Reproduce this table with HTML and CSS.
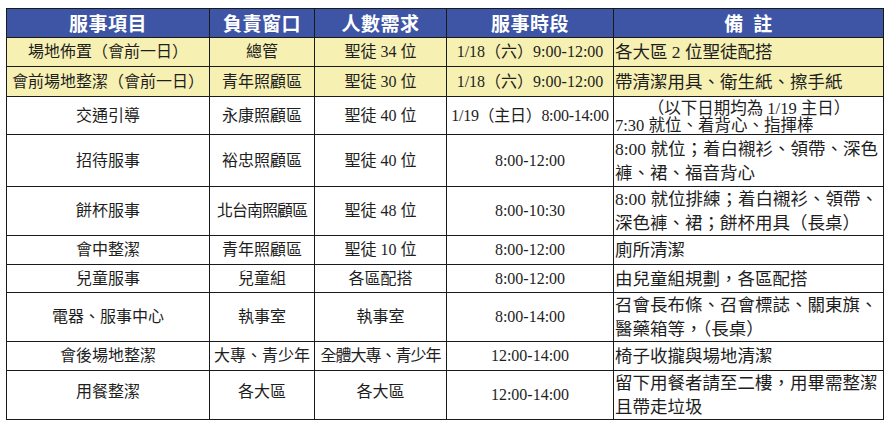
FILE: index.html
```html
<!DOCTYPE html>
<html lang="zh-Hant">
<head>
<meta charset="utf-8">
<link rel="stylesheet" href="styles.css">
</head>
<body>
<table class="plan">
  <colgroup>
    <col class="c1"><col class="c2"><col class="c3"><col class="c4"><col class="c5">
  </colgroup>
  <thead>
    <tr class="head">
      <th>服事項目</th><th>負責窗口</th><th>人數需求</th><th>服事時段</th><th>備&nbsp;&nbsp;註</th>
    </tr>
  </thead>
  <tbody>
    <tr class="hl h29">
      <td>場地佈置（會前一日）</td><td>總管</td><td>聖徒 34 位</td><td class="time">1/18（六）9:00-12:00</td><td class="note">各大區 2 位聖徒配搭</td>
    </tr>
    <tr class="hl h30">
      <td>會前場地整潔（會前一日）</td><td>青年照顧區</td><td>聖徒 30 位</td><td class="time">1/18（六）9:00-12:00</td><td class="note">帶清潔用具、衛生紙、擦手紙</td>
    </tr>
    <tr class="h37">
      <td>交通引導</td><td>永康照顧區</td><td>聖徒 40 位</td><td class="time tight">1/19（主日）8:00-14:00</td><td class="note compact"><div class="center">（以下日期均為 1/19 主日）</div><div>7:30 就位、着背心、指揮棒</div></td>
    </tr>
    <tr class="h52">
      <td>招待服事</td><td>裕忠照顧區</td><td>聖徒 40 位</td><td class="time">8:00-12:00</td><td class="note">8:00 就位；着白襯衫、領帶、深色褲、裙、福音背心</td>
    </tr>
    <tr class="h49">
      <td>餅杯服事</td><td class="narrow">北台南照顧區</td><td>聖徒 48 位</td><td class="time">8:00-10:30</td><td class="note">8:00 就位排練；着白襯衫、領帶、深色褲、裙；餅杯用具（長桌）</td>
    </tr>
    <tr class="h29">
      <td>會中整潔</td><td>青年照顧區</td><td>聖徒 10 位</td><td class="time">8:00-12:00</td><td class="note">廁所清潔</td>
    </tr>
    <tr class="h28">
      <td>兒童服事</td><td>兒童組</td><td>各區配搭</td><td class="time">8:00-12:00</td><td class="note">由兒童組規劃，各區配搭</td>
    </tr>
    <tr class="h49">
      <td>電器、服事中心</td><td>執事室</td><td>執事室</td><td class="time">8:00-14:00</td><td class="note">召會長布條、召會標誌、關東旗、醫藥箱等，（長桌）</td>
    </tr>
    <tr class="h29">
      <td>會後場地整潔</td><td>大專、青少年</td><td class="narrow">全體大專、青少年</td><td class="time">12:00-14:00</td><td class="note">椅子收攏與場地清潔</td>
    </tr>
    <tr class="h48">
      <td class="low">用餐整潔</td><td class="low">各大區</td><td class="low">各大區</td><td class="time">12:00-14:00</td><td class="note">留下用餐者請至二樓，用畢需整潔且帶走垃圾</td>
    </tr>
  </tbody>
</table>
</body>
</html>
```

FILE: styles.css
```css
html, body {
  margin: 0;
  padding: 0;
  background: #ffffff;
}

.plan {
  margin: 8px 0 0 6px;
  border-collapse: collapse;
  table-layout: fixed;
  width: 877px;
  font-family: "Liberation Serif", "Noto Sans CJK TC", serif;
  color: #1e1e1e;
}

.c1 { width: 203px; }
.c2 { width: 105px; }
.c3 { width: 132px; }
.c4 { width: 167px; }
.c5 { width: 270px; }

.plan th,
.plan td {
  border: 1px solid #1a1a1a;
  padding: 0;
  text-align: center;
  vertical-align: middle;
  font-size: 16px;
  line-height: 20px;
  white-space: nowrap;
  overflow: hidden;
}

.head {
  height: 29px;
  background: #3e55a6;
}

.head th {
  color: #ffffff;
  font-family: "Noto Sans CJK TC", sans-serif;
  font-weight: 700;
  font-size: 19px;
  line-height: 24px;
  letter-spacing: 0.5px;
}

.hl { background: #f6f1b2; }

.h28 { height: 28px; }
.h29 { height: 29px; }
.h30 { height: 30px; }
.h37 { height: 37px; }
.h48 { height: 48px; }
.h49 { height: 49px; }
.h52 { height: 52px; }

.plan td.time {
  font-size: 16px;
}

.plan td.tight {
  letter-spacing: -0.3px;
}

.plan td.narrow {
  letter-spacing: -1px;
}

.plan td.note {
  text-align: left;
  padding-left: 1px;
  font-size: 17.5px;
  line-height: 24px;
  white-space: normal;
  word-break: break-all;
}

.plan td.compact {
  font-size: 16.5px;
  line-height: 17px;
  vertical-align: middle;
  padding-top: 3px;
}

.center {
  text-align: center;
}

.plan td.low {
  vertical-align: middle;
  padding-bottom: 6px;
}
```
